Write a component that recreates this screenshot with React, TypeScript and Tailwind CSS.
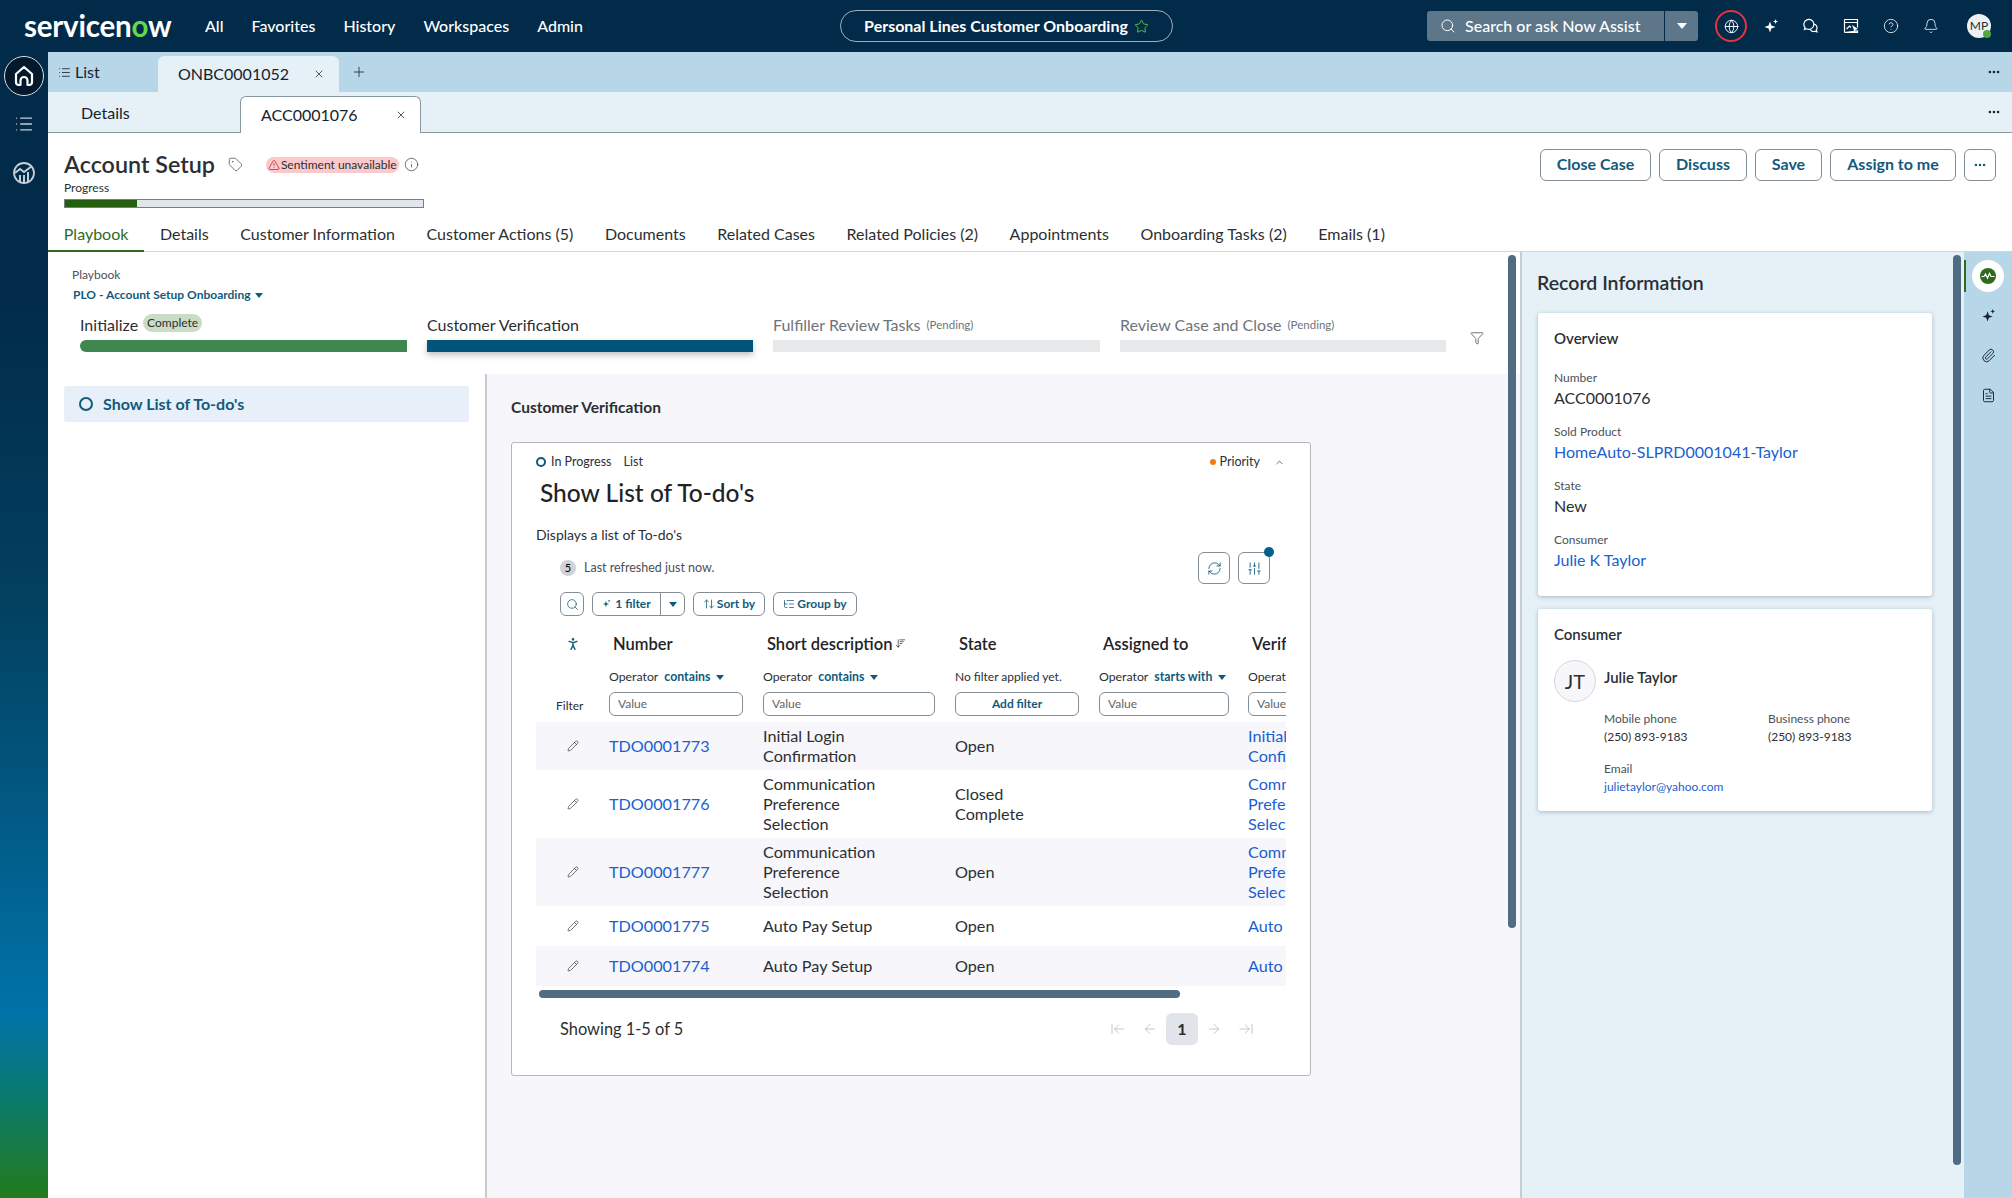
import {
  ArrowDownWideNarrow,
  ArrowLeft,
  ArrowLeftToLine,
  ArrowRight,
  ArrowRightToLine,
  ArrowUpDown,
  Bell,
  ChevronUp,
  CircleHelp,
  Ellipsis,
  FileText,
  Filter,
  Globe,
  Info,
  List,
  ListTree,
  Paperclip,
  Pencil,
  PersonStanding,
  Plus,
  RefreshCw,
  Search,
  SlidersVertical,
  Star,
  Tag,
  TriangleAlert,
  X,
} from 'lucide-react';

function Caret({ className }: { className?: string }) {
  return (
    <svg viewBox="0 0 10 6" className={className} fill="currentColor">
      <path d="M0 0h10L5 6z" />
    </svg>
  );
}

function Sparkle({ className }: { className?: string }) {
  return (
    <svg viewBox="0 0 16 16" className={className} fill="currentColor">
      <path d="M7 3.5 8.4 7.6 12.5 9 8.4 10.4 7 14.5 5.6 10.4 1.5 9 5.6 7.6z" />
      <path d="M12.5 1 13.2 2.8 15 3.5 13.2 4.2 12.5 6 11.8 4.2 10 3.5 11.8 2.8z" />
    </svg>
  );
}

function HomeIcon() {
  return (
    <svg viewBox="0 0 24 24" className="h-6 w-6" fill="none" stroke="white" strokeWidth="2.2" strokeLinejoin="round">
      <path d="M12 3 4 10v8a3 3 0 0 0 3 3h1.5v-4.5a3.5 3.5 0 0 1 7 0V21H17a3 3 0 0 0 3-3v-8z" />
    </svg>
  );
}

function AnalyticsIcon() {
  return (
    <svg viewBox="0 0 24 24" className="h-[24px] w-[24px]" fill="none" stroke="#c3ced6" strokeWidth="1.8">
      <circle cx="12" cy="12" r="10" />
      <path d="m3 12 5-4 4 3 8-6" />
      <path d="M8 21v-7M12 22v-8M16 21v-10" strokeWidth="2" />
    </svg>
  );
}

function ChatIcon() {
  return (
    <svg viewBox="0 0 16 16" className="h-[16px] w-[16px]" fill="none" stroke="white" strokeWidth="1.2">
      <path d="M2 9.5 1.5 11.5 3.6 10.8A5 5 0 1 0 2 9.5z" />
      <path d="M10.8 6.2a3.6 3.6 0 0 1 2.6 5.7l.6 2-2.2-.7a3.6 3.6 0 0 1-4.6-1.7" />
    </svg>
  );
}

function ScreenCursorIcon() {
  return (
    <svg viewBox="0 0 16 16" className="h-[16px] w-[16px]" fill="none" stroke="white" strokeWidth="1.2">
      <path d="M1.5 1.5h13v8M14.5 13v1.5h-13zM1.5 14.5v-13M1.5 4.5h13" />
      <path d="m3.5 11 3-3 1.5 1.5" />
      <path d="m9 7 6 4-2.5.8L12 15z" fill="white" stroke="none" />
    </svg>
  );
}

function PulseIcon() {
  return (
    <svg viewBox="0 0 16 16" className="h-[16px] w-[16px]">
      <circle cx="8" cy="8" r="8" fill="#2e6b1f" />
      <path d="M1.5 8.5H4L5.5 6l2 4 2-4.5 1.5 3h3.5" fill="none" stroke="white" strokeWidth="1.2" />
    </svg>
  );
}

const topNav = ['All', 'Favorites', 'History', 'Workspaces', 'Admin'];
const recordTabs = [
  'Playbook',
  'Details',
  'Customer Information',
  'Customer Actions (5)',
  'Documents',
  'Related Cases',
  'Related Policies (2)',
  'Appointments',
  'Onboarding Tasks (2)',
  'Emails (1)',
];

const rows = [
  { id: 'TDO0001773', desc: ['Initial Login', 'Confirmation'], state: ['Open'], verif: ['Initial', 'Confirmation'], h: 'h-[48px]', alt: true },
  { id: 'TDO0001776', desc: ['Communication', 'Preference', 'Selection'], state: ['Closed', 'Complete'], verif: ['Communication', 'Preference', 'Selection'], h: 'h-[68px]', alt: false },
  { id: 'TDO0001777', desc: ['Communication', 'Preference', 'Selection'], state: ['Open'], verif: ['Communication', 'Preference', 'Selection'], h: 'h-[68px]', alt: true },
  { id: 'TDO0001775', desc: ['Auto Pay Setup'], state: ['Open'], verif: ['Auto'], h: 'h-[40px]', alt: false },
  { id: 'TDO0001774', desc: ['Auto Pay Setup'], state: ['Open'], verif: ['Auto'], h: 'h-[40px]', alt: true },
];

const gridCols = 'grid grid-cols-[73px_154px_192px_144px_149px_38px]';

function TopBar() {
  return (
    <header className="flex h-[52px] shrink-0 items-center bg-[#022a49] text-white">
      <div className="ml-[24px] w-[150px] pb-[1px] text-[29.5px] leading-none font-bold tracking-[-0.2px] whitespace-nowrap">
        servicen<span className="text-[#62d84e]">o</span>w
      </div>
      <nav className="ml-[31px] flex w-[635px] gap-[28px] text-[16px] font-medium">
        {topNav.map((t) => (
          <span key={t}>{t}</span>
        ))}
      </nav>
      <div className="flex h-[32px] w-[333px] items-center justify-center gap-[6px] rounded-full border border-[#9fb0bc] text-[16px] font-bold">
        Personal Lines Customer Onboarding
        <Star className="h-[15px] w-[15px] text-[#62c554]" strokeWidth={1.5} />
      </div>
      <div className="ml-[254px] flex h-[30px] w-[271px] items-center rounded-[3px] bg-[#5d7689] text-[16px] font-medium">
        <Search className="ml-[13px] h-[16px] w-[16px]" strokeWidth={1.5} />
        <span className="ml-[9px] w-[199px]">Search or ask Now Assist</span>
        <span className="flex h-full flex-1 items-center justify-center border-l border-[#022a49]">
          <Caret className="h-[6px] w-[10px]" />
        </span>
      </div>
      <div className="ml-[17px] flex h-[32px] w-[32px] items-center justify-center rounded-full border-2 border-[#e5343c]">
        <Globe className="h-[15px] w-[15px]" strokeWidth={1.5} />
      </div>
      <div className="ml-[16px] flex items-center gap-[24px]">
        <Sparkle className="h-[16px] w-[16px]" />
        <ChatIcon />
        <ScreenCursorIcon />
        <CircleHelp className="h-[16px] w-[16px]" strokeWidth={1.2} />
        <Bell className="h-[16px] w-[16px]" strokeWidth={1.2} />
      </div>
      <div className="relative ml-[28px] flex h-[24px] w-[24px] items-center justify-center rounded-full bg-[#eef1f4] text-[12px] text-[#1d2b36]">
        MP
        <span className="absolute right-0 bottom-0 h-[8px] w-[8px] rounded-full bg-[#52a83a]" />
      </div>
    </header>
  );
}

function SideRail() {
  return (
    <aside className="flex w-[48px] shrink-0 flex-col items-center bg-[linear-gradient(180deg,#022a49_20%,#03405f_48%,#0073a8_84%,#0a7a70_91%,#237b1c_100%)] pt-[4px]">
      <div className="flex h-[40px] w-[40px] items-center justify-center rounded-full border border-[#d5dde3] bg-[#04192b]">
        <HomeIcon />
      </div>
      <List className="mt-[18px] h-[20px] w-[20px] text-[#c3ced6]" strokeWidth={1.6} />
      <div className="mt-[27px]">
        <AnalyticsIcon />
      </div>
    </aside>
  );
}

function PageHeader() {
  return (
    <>
      <div className="flex h-[40px] shrink-0 items-end bg-[#b7d7e8] text-[16px] text-[#16232e]">
        <div className="flex h-[40px] w-[110px] items-center gap-[4px] pl-[10px]">
          <List className="h-[13px] w-[13px]" strokeWidth={1.5} />
          List
        </div>
        <div className="flex h-[36px] w-[181px] items-center justify-between rounded-t-[6px] bg-[#e5f0f7] pr-[14px] pl-[20px]">
          ONBC0001052
          <X className="h-[12px] w-[12px]" strokeWidth={1.5} />
        </div>
        <div className="flex h-[40px] flex-1 items-center pl-[12px]">
          <Plus className="h-[16px] w-[16px]" strokeWidth={1.2} />
        </div>
        <div className="flex h-[40px] items-center pr-[11px]">
          <Ellipsis className="h-[14px] w-[14px]" strokeWidth={2.5} />
        </div>
      </div>
      <div className="flex h-[41px] shrink-0 items-end border-b border-[#8b979f] bg-[#e5f0f7] text-[16px] text-[#16232e]">
        <div className="flex h-full w-[192px] items-center pt-[2px] pl-[33px]">Details</div>
        <div className="-mb-px flex h-[37px] w-[181px] items-center justify-between rounded-t-[6px] border border-b-0 border-[#8b979f] bg-white pr-[13px] pl-[20px]">
          ACC0001076
          <X className="h-[12px] w-[12px]" strokeWidth={1.5} />
        </div>
        <div className="flex h-full flex-1 items-center justify-end pr-[11px]">
          <Ellipsis className="h-[14px] w-[14px]" strokeWidth={2.5} />
        </div>
      </div>
      <div className="flex h-[87px] shrink-0 items-start justify-between bg-white pr-[16px] pl-[16px]">
        <div>
          <div className="mt-[15px] flex h-[33px] items-center">
            <h1 className="text-[23.3px] leading-none font-semibold text-[#2b2f33]">Account Setup</h1>
            <Tag className="ml-[13px] h-[15px] w-[15px] text-[#5a6670]" strokeWidth={1.4} />
            <span className="ml-[23px] flex h-[16px] items-center gap-[1px] rounded-full bg-[#fbc9cb] px-[2px] text-[12px] text-[#2b2f33]">
              <TriangleAlert className="h-[12px] w-[12px] text-[#c3222b]" strokeWidth={1.5} />
              Sentiment unavailable
            </span>
            <Info className="ml-[5px] h-[15px] w-[15px] text-[#3c4650]" strokeWidth={1.2} />
          </div>
          <div className="-mt-[1px] text-[12px] leading-[16px] text-[#2b2f33]">Progress</div>
          <div className="mt-[3px] flex h-[9px] w-[360px] border border-[#757f87] bg-[#e1e5ec]">
            <div className="h-full w-[72px] bg-[#255e0f]" />
          </div>
        </div>
        <div className="mt-[16px] flex h-[32px] gap-[8px] text-[16px] font-bold text-[#125a7c]">
          <button className="w-[111px] rounded-[6px] border border-[#838d95] pb-[2px]">Close Case</button>
          <button className="w-[88px] rounded-[6px] border border-[#838d95] pb-[2px]">Discuss</button>
          <button className="w-[67px] rounded-[6px] border border-[#838d95] pb-[2px]">Save</button>
          <button className="w-[126px] rounded-[6px] border border-[#838d95] pb-[2px]">Assign to me</button>
          <button className="flex w-[32px] items-center justify-center rounded-[6px] border border-[#838d95]">
            <Ellipsis className="h-[14px] w-[14px]" strokeWidth={2.5} />
          </button>
        </div>
      </div>
      <div className="flex h-[32px] shrink-0 border-b border-[#d2d6d9] bg-white text-[16px] text-[#2b2f33]">
        {recordTabs.map((t, i) => (
          <span
            key={t}
            className={
              i === 0
                ? '-mb-px flex h-[32px] items-center border-b-2 border-[#2e6b1f] px-[15.8px] pb-[2px] text-[#2e6b1f]'
                : 'flex h-full items-center px-[15.8px] pb-[3px]'
            }
          >
            {t}
          </span>
        ))}
      </div>
    </>
  );
}

function Stages() {
  return (
    <div className="flex h-[122px] shrink-0 flex-col bg-white pr-[14px] pl-[16px]">
      <div className="pt-[15px] pl-[8px] text-[12px] leading-[16px] text-[#4a5158]">Playbook</div>
      <div className="mt-[4px] flex items-center gap-[4px] pl-[9px] text-[12px] leading-[16px] font-bold text-[#125a7c]">
        PLO - Account Setup Onboarding
        <Caret className="h-[5px] w-[8px]" />
      </div>
      <div className="mt-[10px] flex gap-[20px] pl-[16px]">
        <div className="w-[327px]">
          <div className="flex h-[24px] items-center text-[16px] text-[#2b2f33]">
            Initialize
            <span className="-mt-[5px] ml-[5px] rounded-full bg-[#cbdcc5] px-[4px] text-[12px] leading-[18px]">Complete</span>
          </div>
          <div className="mt-[3px] h-[12px] rounded-l-full bg-[#3e874f]" />
        </div>
        <div className="w-[326px]">
          <div className="flex h-[24px] items-center text-[16px] text-[#2b2f33]">Customer Verification</div>
          <div className="mt-[3px] h-[12px] bg-[#03547a] shadow-[0_3px_6px_rgba(0,0,0,0.25)]" />
        </div>
        <div className="w-[327px]">
          <div className="flex h-[24px] items-center gap-[6px] text-[16px] text-[#6d747a]">
            Fulfiller Review Tasks <span className="text-[11.5px]">(Pending)</span>
          </div>
          <div className="mt-[3px] h-[12px] bg-[#e6e8ea]" />
        </div>
        <div className="w-[326px]">
          <div className="flex h-[24px] items-center gap-[6px] text-[16px] text-[#6d747a]">
            Review Case and Close <span className="text-[11.5px]">(Pending)</span>
          </div>
          <div className="mt-[3px] h-[12px] bg-[#e6e8ea]" />
        </div>
        <Filter className="mt-[18px] ml-[4px] h-[14px] w-[14px] text-[#444c52]" strokeWidth={1.3} />
      </div>
    </div>
  );
}

function OperatorCell({ op }: { op: string }) {
  return (
    <div className="flex items-center gap-[6px] whitespace-nowrap text-[12.3px] text-[#2b2f33]">
      Operator <span className="font-bold text-[#125a7c]">{op}</span>
      <Caret className="h-[5px] w-[8px] text-[#125a7c]" />
    </div>
  );
}

function ValueInput({ className }: { className: string }) {
  return (
    <div className={`flex h-[24px] items-center rounded-[6px] border border-[#838d95] pl-[8px] text-[12px] text-[#5d656b] ${className}`}>
      Value
    </div>
  );
}

function TodoTable() {
  return (
    <div className="mt-[8px] w-[750px] overflow-hidden">
      <div className={`${gridCols} h-[40px] items-center text-[16.5px] font-semibold text-[#1f2327]`}>
        <div className="flex justify-center">
          <PersonStanding className="h-[16px] w-[16px] text-[#125a7c]" strokeWidth={2} />
        </div>
        <div className="pl-[4px]">Number</div>
        <div className="flex items-center gap-[3px] pl-[4px]">
          Short description
          <ArrowDownWideNarrow className="-mt-[2px] h-[11px] w-[11px]" strokeWidth={1.5} />
        </div>
        <div className="pl-[4px]">State</div>
        <div className="pl-[4px]">Assigned to</div>
        <div className="overflow-hidden pl-[4px] whitespace-nowrap">Verification</div>
      </div>
      <div className={`${gridCols} h-[26px] items-center`}>
        <div />
        <OperatorCell op="contains" />
        <OperatorCell op="contains" />
        <div className="text-[12px] whitespace-nowrap text-[#2b2f33]">No filter applied yet.</div>
        <OperatorCell op="starts with" />
        <div className="overflow-hidden text-[12.3px] text-[#2b2f33]">Operator</div>
      </div>
      <div className={`${gridCols} mt-[2px] h-[30px] items-start`}>
        <div className="pt-[5px] pl-[20px] text-[12px] text-[#2b2f33]">Filter</div>
        <ValueInput className="w-[134px]" />
        <ValueInput className="w-[172px]" />
        <div className="flex h-[24px] w-[124px] items-center justify-center rounded-[6px] border border-[#838d95] pb-[1px] text-[12px] font-bold text-[#125a7c]">
          Add filter
        </div>
        <ValueInput className="w-[130px]" />
        <ValueInput className="w-[120px]" />
      </div>
      {rows.map((r) => (
        <div key={r.id} className={`${gridCols} ${r.h} items-center pb-[1px] text-[16.2px] leading-[20px] ${r.alt ? 'bg-[#f6f6fb]' : 'bg-white'}`}>
          <div className="flex justify-center">
            <Pencil className="h-[12px] w-[12px] text-[#2b2f33]" strokeWidth={1.3} />
          </div>
          <div className="text-[#1a5fd0]">{r.id}</div>
          <div className="text-[#2b2f33]">
            {r.desc.map((d) => (
              <div key={d}>{d}</div>
            ))}
          </div>
          <div className="text-[#2b2f33]">
            {r.state.map((d) => (
              <div key={d}>{d}</div>
            ))}
          </div>
          <div />
          <div className="overflow-hidden whitespace-nowrap text-[#1a5fd0]">
            {r.verif.map((d) => (
              <div key={d}>{d}</div>
            ))}
          </div>
        </div>
      ))}
    </div>
  );
}

function TodoCard() {
  return (
    <div className="mt-[26px] h-[634px] w-[800px] rounded-[3px] border border-[#b3b8bd] bg-white px-[24px] pt-[11px]">
      <div className="flex h-[16px] items-center text-[12.5px] text-[#2b2f33]">
        <span className="h-[10px] w-[10px] rounded-full border-2 border-[#125a7c]" />
        <span className="ml-[5px]">In Progress</span>
        <span className="ml-[12px]">List</span>
        <span className="ml-auto h-[6px] w-[6px] rounded-full bg-[#ee7d11]" />
        <span className="ml-[4px]">Priority</span>
        <ChevronUp className="mr-[1px] ml-[14px] h-[11px] w-[11px]" strokeWidth={1.5} />
      </div>
      <h2 className="mt-[6px] ml-[4px] text-[24.5px] leading-[34px] font-medium text-[#1f2327]">Show List of To-do's</h2>
      <div className="mt-[16px] text-[14px] leading-[18px] text-[#2b2f33]">Displays a list of To-do's</div>
      <div className="mt-[8px] flex h-[32px] items-center pr-[16px] pl-[24px]">
        <span className="flex h-[16px] w-[16px] items-center justify-center rounded-full bg-[#cfd2d6] text-[11px]">5</span>
        <span className="ml-[8px] text-[12.5px] text-[#4a5158]">Last refreshed just now.</span>
        <span className="ml-auto flex h-[32px] w-[32px] items-center justify-center rounded-[6px] border border-[#838d95] text-[#125a7c]">
          <RefreshCw className="h-[15px] w-[15px]" strokeWidth={1.4} />
        </span>
        <span className="relative ml-[8px] flex h-[32px] w-[32px] items-center justify-center rounded-[6px] border border-[#838d95] text-[#125a7c]">
          <SlidersVertical className="h-[15px] w-[15px]" strokeWidth={1.4} />
          <span className="absolute -top-[6px] -right-[5px] h-[10px] w-[10px] rounded-full bg-[#03608c]" />
        </span>
      </div>
      <div className="mt-[8px] flex h-[24px] gap-[8px] pl-[24px] text-[12px] font-bold text-[#125a7c]">
        <span className="flex w-[24px] items-center justify-center rounded-[6px] border border-[#838d95]">
          <Search className="h-[13px] w-[13px]" strokeWidth={1.4} />
        </span>
        <span className="flex w-[93px] items-center rounded-[6px] border border-[#838d95]">
          <span className="flex flex-1 items-center justify-center gap-[4px] pb-[1px]">
            <Sparkle className="h-[9px] w-[9px]" />1 filter
          </span>
          <span className="flex h-full w-[24px] items-center justify-center border-l border-[#838d95]">
            <Caret className="h-[5px] w-[8px]" />
          </span>
        </span>
        <span className="flex w-[72px] items-center justify-center gap-[2px] rounded-[6px] border border-[#838d95] pb-[1px]">
          <ArrowUpDown className="h-[12px] w-[12px]" strokeWidth={1.5} />
          Sort by
        </span>
        <span className="flex w-[84px] items-center justify-center gap-[2px] rounded-[6px] border border-[#838d95] pb-[1px]">
          <ListTree className="h-[12px] w-[12px]" strokeWidth={1.5} />
          Group by
        </span>
      </div>
      <TodoTable />
      <div className="mt-[4px] ml-[3px] h-[8px] w-[641px] rounded-full bg-[#4f6c82]" />
      <div className="mt-[15px] flex h-[32px] items-center pr-[32px] pl-[24px]">
        <span className="text-[16.4px] text-[#2b2f33]">Showing 1-5 of 5</span>
        <div className="ml-auto flex items-center gap-[8px] text-[#b5bbc0]">
          <ArrowLeftToLine className="h-[16px] w-[16px]" strokeWidth={1.2} />
          <ArrowLeft className="ml-[8px] h-[16px] w-[16px]" strokeWidth={1.2} />
          <span className="flex h-[32px] w-[32px] items-center justify-center rounded-[6px] bg-[#e1e4ea] text-[16px] font-bold text-[#2b2f33]">1</span>
          <ArrowRight className="h-[16px] w-[16px]" strokeWidth={1.2} />
          <ArrowRightToLine className="ml-[8px] h-[16px] w-[16px]" strokeWidth={1.2} />
        </div>
      </div>
    </div>
  );
}

function PlaybookPane() {
  return (
    <section className="relative flex min-w-0 flex-1 flex-col bg-white">
      <Stages />
      <div className="flex min-h-0 flex-1">
        <div className="w-[439px] shrink-0 border-r-2 border-[#c8ccd0] pt-[12px] pr-[16px] pl-[16px]">
          <div className="flex h-[36px] items-center gap-[10px] rounded-[3px] bg-[#e7f0f8] pb-[1px] pl-[15px] text-[16px] font-bold text-[#125a7c]">
            <span className="h-[14px] w-[14px] rounded-full border-2 border-[#125a7c]" />
            Show List of To-do's
          </div>
        </div>
        <div className="flex-1 bg-[#f6f6fb] pt-[24px] pl-[24px]">
          <div className="text-[15.5px] leading-[18px] font-bold text-[#2b2f33]">Customer Verification</div>
          <TodoCard />
        </div>
      </div>
      <div className="absolute top-[3px] right-[4px] h-[673px] w-[8px] rounded-full bg-[#4f6c82]" />
    </section>
  );
}

function RecordPanel() {
  const label = 'text-[12px] leading-[16px] text-[#4a5158]';
  const value = 'mt-[2px] text-[16px] leading-[20px] text-[#2b2f33]';
  const link = 'mt-[2px] text-[16px] leading-[20px] text-[#1a5fd0]';
  return (
    <section className="relative flex w-[444px] shrink-0 flex-col border-l-2 border-[#c8ccd0] bg-[#e5f0f7] pl-[16px]">
      <h2 className="mt-[17px] -ml-[1px] text-[19.5px] leading-[28px] font-semibold text-[#2b2f33]">Record Information</h2>
      <div className="mt-[16px] h-[283px] w-[394px] rounded-[3px] bg-white px-[16px] pt-[16px] shadow-[0_1px_4px_rgba(80,100,120,0.4)]">
        <div className="text-[15px] leading-[18px] font-semibold text-[#2b2f33]">Overview</div>
        <div className={`mt-[23px] ${label}`}>Number</div>
        <div className={value}>ACC0001076</div>
        <div className={`mt-[16px] ${label}`}>Sold Product</div>
        <div className={link}>HomeAuto-SLPRD0001041-Taylor</div>
        <div className={`mt-[16px] ${label}`}>State</div>
        <div className={value}>New</div>
        <div className={`mt-[16px] ${label}`}>Consumer</div>
        <div className={link}>Julie K Taylor</div>
      </div>
      <div className="mt-[13px] h-[202px] w-[394px] rounded-[3px] bg-white px-[16px] pt-[16px] shadow-[0_1px_4px_rgba(80,100,120,0.4)]">
        <div className="text-[15px] leading-[18px] font-semibold text-[#2b2f33]">Consumer</div>
        <div className="mt-[17px] flex gap-[8px]">
          <div className="flex h-[42px] w-[42px] shrink-0 items-center justify-center rounded-full border border-[#d5d8dc] bg-[#f6f6fb] text-[20px] text-[#2b2f33]">
            JT
          </div>
          <div className="flex-1">
            <div className="mt-[7px] text-[15px] leading-[20px] font-semibold text-[#2b2f33]">Julie Taylor</div>
            <div className="mt-[23px] grid grid-cols-[164px_1fr] text-[12px] leading-[18px] text-[#2b2f33]">
              <div>
                <div className="text-[#4a5158]">Mobile phone</div>
                <div>(250) 893-9183</div>
              </div>
              <div>
                <div className="text-[#4a5158]">Business phone</div>
                <div>(250) 893-9183</div>
              </div>
            </div>
            <div className="mt-[14px] text-[12px] leading-[18px] text-[#4a5158]">Email</div>
            <div className="text-[12px] leading-[18px] text-[#1a5fd0]">julietaylor@yahoo.com</div>
          </div>
        </div>
      </div>
      <div className="absolute top-[3px] right-[3px] h-[910px] w-[8px] rounded-full bg-[#4f6c82]" />
    </section>
  );
}

function RightRail() {
  return (
    <aside className="flex w-[48px] shrink-0 flex-col items-center bg-[#b7d7e8] pt-[8px] text-[#1f2d38]">
      <div className="relative flex h-[32px] w-[32px] items-center justify-center rounded-full bg-white">
        <span className="absolute top-0 -left-[8px] h-[32px] w-[2px] bg-[#2e6b1f]" />
        <PulseIcon />
      </div>
      <Sparkle className="mt-[16px] h-[15px] w-[15px] text-[#16232e]" />
      <Paperclip className="mt-[25px] h-[15px] w-[15px]" strokeWidth={1.6} />
      <FileText className="mt-[25px] h-[15px] w-[15px]" strokeWidth={1.6} />
    </aside>
  );
}

export default function App() {
  return (
    <div className="flex h-[1198px] w-[2012px] flex-col overflow-hidden bg-white font-['Lato',sans-serif]">
      <TopBar />
      <div className="flex min-h-0 flex-1">
        <SideRail />
        <main className="flex min-w-0 flex-1 flex-col">
          <PageHeader />
          <div className="flex min-h-0 flex-1">
            <PlaybookPane />
            <RecordPanel />
            <RightRail />
          </div>
        </main>
      </div>
    </div>
  );
}
